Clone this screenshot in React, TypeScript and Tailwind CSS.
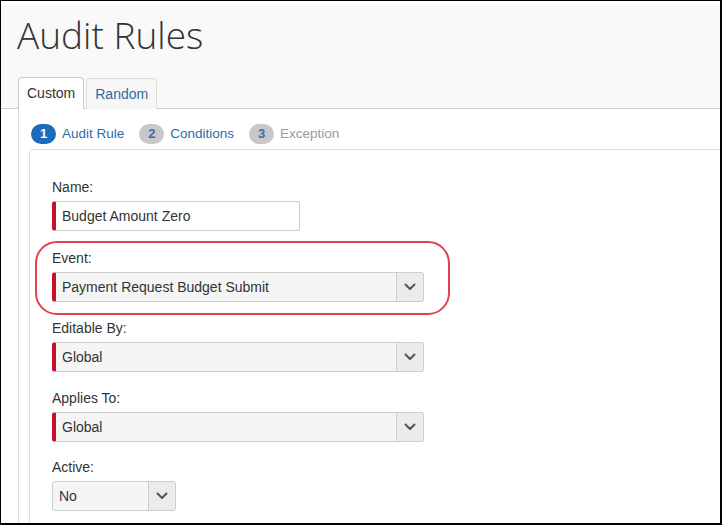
import React from "react";

const Chevron = () => (
  <svg width="12" height="8" viewBox="0 0 12 8" fill="none">
    <path d="M1.5 1.5L6 6L10.5 1.5" stroke="#555" strokeWidth="2" strokeLinecap="round" strokeLinejoin="round" />
  </svg>
);

const Select = ({
  value,
  width,
  required = true,
}: {
  value: string;
  width: string;
  required?: boolean;
}) => (
  <div
    className={`flex h-[30px] ${width} rounded-[3px] border border-[#ccc] bg-[#f5f5f5] ${
      required ? "border-l-4 border-l-[#c8102e]" : ""
    }`}
  >
    <div className="flex flex-1 items-center pl-[6px] text-[14px] text-[#333]">{value}</div>
    <div className="flex w-[27px] items-center justify-center rounded-r-[3px] border-l border-[#ccc] bg-[#ebebeb]">
      <Chevron />
    </div>
  </div>
);

const Label = ({ children }: { children: React.ReactNode }) => (
  <div className="mb-[4px] text-[14px] leading-[19px] text-[#333]">{children}</div>
);

const Step = ({
  n,
  label,
  active,
  disabled,
}: {
  n: number;
  label: string;
  active?: boolean;
  disabled?: boolean;
}) => (
  <div className="flex items-center">
    <span
      className={`flex h-[20px] w-[25px] items-center justify-center rounded-full text-[13px] font-bold ${
        active ? "bg-[#1c6cbb] text-white" : "bg-[#c8c8c8] text-[#3b6ea6]"
      }`}
    >
      {n}
    </span>
    <span
      className={`ml-[6px] mr-[15px] text-[13.5px] ${
        disabled ? "text-[#9a9a9a]" : "text-[#2d6ca8]"
      }`}
    >
      {label}
    </span>
  </div>
);

export default function App() {
  return (
    <div
      className="h-[525px] w-[722px] overflow-hidden border-l border-t border-r-2 border-b-2 border-black bg-white"
      style={{ fontFamily: '"Liberation Sans", Arial, sans-serif' }}
    >
      {/* page header */}
      <div className="flex h-[108px] flex-col border-b border-[#ccc] bg-[#f9f9f9]">
        <div className="border-t-4 border-white" />
        <h1
          className="pl-[16px] pt-[8px] text-[37px] font-light leading-[44px] text-[#333]"
          style={{ fontFamily: '"Open Sans", sans-serif' }}
        >
          Audit Rules
        </h1>
        <div className="mb-[-1px] mt-auto flex gap-[2px] pl-[17px]">
          <div className="flex h-[32px] items-center rounded-t-[4px] border border-b-0 border-[#ccc] bg-white px-[8px] text-[14px] text-[#333]">
            Custom
          </div>
          <div className="flex h-[31px] items-center self-end rounded-t-[4px] border border-b-0 border-[#ddd] bg-[#f7f7f7] px-[8px] text-[14px] text-[#2d6ca8]">
            Random
          </div>
        </div>
      </div>

      {/* tab panel */}
      <div className="ml-[17px] h-full border-l border-[#ddd]">
        <div className="flex pb-[5px] pl-[12px] pt-[15px]">
          <Step n={1} label="Audit Rule" active />
          <Step n={2} label="Conditions" />
          <Step n={3} label="Exception" disabled />
        </div>

        <div className="ml-[10px] h-full rounded-tl-[4px] border-l border-t border-[#ddd] pl-[22px] pt-[28px]">
          <div className="mb-[18px]">
            <Label>Name:</Label>
            <div className="flex h-[30px] w-[248px] items-center rounded-[3px] border border-[#ccc] border-l-4 border-l-[#c8102e] bg-white pl-[6px] text-[14px] text-[#333]">
              Budget Amount Zero
            </div>
          </div>

          <div className="relative mb-[17px]">
            <Label>Event:</Label>
            <Select value="Payment Request Budget Submit" width="w-[372px]" />
            {/* highlight annotation */}
            <div className="pointer-events-none absolute left-[-17px] top-[-8px] h-[74px] w-[415px] rounded-[22px] border-2 border-[#e0424e]" />
          </div>

          <div className="mb-[17px]">
            <Label>Editable By:</Label>
            <Select value="Global" width="w-[372px]" />
          </div>

          <div className="mb-[16px]">
            <Label>Applies To:</Label>
            <Select value="Global" width="w-[372px]" />
          </div>

          <div>
            <Label>Active:</Label>
            <Select value="No" width="w-[124px]" required={false} />
          </div>
        </div>
      </div>
    </div>
  );
}
